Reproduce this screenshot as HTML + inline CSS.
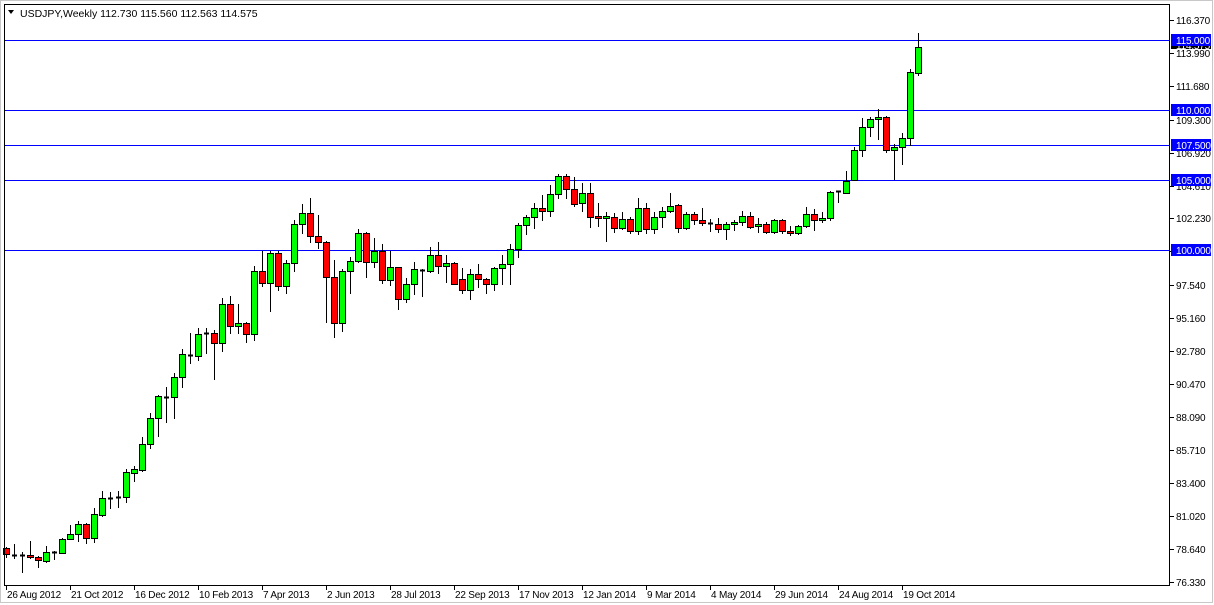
<!DOCTYPE html>
<html><head><meta charset="utf-8"><style>
html,body{margin:0;padding:0;background:#fff;}
svg{display:block;}
text{font-family:"Liberation Sans",sans-serif;font-size:10.5px;}
.ax text{font-size:10px;letter-spacing:-0.2px;}
</style></head><body>
<svg id="s" width="1214" height="605" xmlns="http://www.w3.org/2000/svg">
<rect x="0" y="0" width="1214" height="605" fill="#fff"/>
<rect x="0.5" y="0.5" width="1212" height="602" fill="none" stroke="#c8c8c8"/>
<g id="lines"></g>
<g id="c"></g>
<rect x="4.5" y="4.5" width="1165" height="581" fill="none" stroke="#000"/>
<g id="ax" class="ax"></g>
<path d="M8 10 L14 10 L11 14 Z" fill="#000"/>
<text x="20" y="17" fill="#000">USDJPY,Weekly  112.730 115.560 112.563 114.575</text>
</svg>
<script>
var NS="http://www.w3.org/2000/svg";
function el(p,t,a,txt){var e=document.createElementNS(NS,t);for(var k in a)e.setAttribute(k,a[k]);if(txt!=null)e.textContent=txt;p.appendChild(e);return e;}
var d=[
[548,554,547,557,'r'],[555,555,544,558,'d'],[555,555,552,572,'d'],[555,557,541,558,'r'],[557,560,556,567,'r'],
[552,561,546,562,'g'],[552,552,551,559,'d'],[539,553,538,553,'g'],[534,539,525,539,'g'],[524,534,521,541,'g'],
[524,538,523,543,'r'],[514,538,508,542,'g'],[498,515,491,516,'g'],[498,498,492,508,'d'],[497,497,491,507,'d'],
[472,497,469,502,'g'],[469,473,466,481,'g'],[444,470,437,471,'g'],[418,444,413,448,'g'],[396,418,395,436,'g'],
[397,397,387,422,'d'],[377,397,373,418,'g'],[354,377,349,387,'g'],[355,355,333,363,'d'],[334,356,328,360,'g'],
[333,333,328,353,'d'],[333,343,330,379,'r'],[304,343,298,351,'g'],[304,326,296,333,'r'],[323,326,304,333,'g'],
[323,334,322,342,'r'],[271,334,266,340,'g'],[271,283,251,286,'r'],[253,283,251,311,'g'],[253,286,251,290,'r'],
[263,286,260,293,'g'],[224,263,220,271,'g'],[213,224,204,233,'g'],[213,236,198,242,'r'],[236,242,215,248,'r'],
[242,277,241,322,'r'],[277,323,260,337,'r'],[271,323,269,331,'g'],[261,271,257,293,'g'],[233,261,229,262,'g'],
[233,262,232,277,'r'],[251,262,238,267,'g'],[251,280,244,283,'r'],[267,280,251,285,'g'],[267,299,267,309,'r'],
[284,299,278,302,'g'],[269,284,262,294,'g'],[270,270,269,296,'d'],[255,271,247,272,'g'],[255,266,242,273,'r'],
[263,266,255,282,'g'],[263,284,262,284,'r'],[279,290,268,293,'r'],[274,290,269,299,'g'],[274,279,264,287,'r'],
[279,284,278,293,'r'],[268,284,267,290,'g'],[264,268,255,284,'g'],[249,264,244,284,'g'],[225,249,223,257,'g'],
[217,225,215,234,'g'],[208,217,203,228,'g'],[208,211,195,220,'r'],[194,211,185,216,'g'],[176,194,174,198,'g'],
[176,189,174,198,'r'],[189,204,177,206,'r'],[193,203,183,211,'g'],[193,217,183,227,'r'],[216,218,203,226,'r'],
[216,218,212,241,'g'],[217,228,213,232,'r'],[219,228,212,229,'g'],[219,231,217,233,'r'],[208,231,198,234,'g'],
[208,229,203,233,'r'],[217,229,212,233,'g'],[211,217,207,227,'g'],[206,211,193,212,'g'],[205,228,204,232,'r'],
[214,228,212,229,'g'],[214,220,212,224,'r'],[220,223,208,225,'r'],[223,223,219,231,'d'],[224,229,218,232,'r'],
[224,229,222,239,'g'],[222,224,220,230,'g'],[216,222,211,225,'g'],[216,227,212,228,'r'],[224,226,218,232,'g'],
[224,232,222,233,'r'],[220,232,219,233,'g'],[220,231,219,233,'r'],[231,233,226,235,'r'],[226,233,225,234,'g'],
[214,226,207,227,'g'],[214,220,209,230,'r'],[218,220,212,222,'g'],[192,218,191,220,'g'],[191,191,191,202,'d'],
[181,193,171,193,'g'],[150,180,147,180,'g'],[127,150,118,156,'g'],[119,127,117,136,'g'],[117,119,109,139,'g'],
[117,150,116,152,'r'],[147,150,144,179,'g'],[138,147,133,164,'g'],[72,138,69,145,'g'],[47,73,33,75,'g']
];
var L=document.getElementById('lines');
[40,110,145,180,250].forEach(function(y){el(L,'line',{x1:4,x2:1169,y1:y+.5,y2:y+.5,stroke:'#0000ff','stroke-width':1});});
var C=document.getElementById('c');
d.forEach(function(c,i){
 var x=Math.round(5.7+8*i);
 el(C,'line',{x1:x+.5,x2:x+.5,y1:c[2],y2:c[3]+1,stroke:'#000','stroke-width':1});
 if(c[4]=='d'){el(C,'line',{x1:x-2,x2:x+3,y1:c[0]+.5,y2:c[0]+.5,stroke:'#000','stroke-width':2});}
 else{el(C,'rect',{x:x-2.5,y:c[0]+.5,width:6,height:Math.max(c[1]-c[0],2),fill:c[4]=='g'?'#00ff00':'#ff0000',stroke:'#000','stroke-width':1});}
});
var A=document.getElementById('ax');
var labs=[['116.370',20],['113.990',53],['111.680',86],['109.300',120],['106.920',153],['104.610',186],['102.230',218],['99.850',251],['97.540',285],['95.160',318],['92.780',351],['90.470',384],['88.090',417],['85.710',450],['83.400',483],['81.020',516],['78.640',549],['76.330',582]];
labs.forEach(function(l){el(A,'line',{x1:1170,x2:1174,y1:l[1]+.5,y2:l[1]+.5,stroke:'#000'});el(A,'text',{x:1176,y:l[1]+4,fill:'#000'},l[0]);});
[['110.000',110],['107.500',145],['105.000',180],['100.000',250]].forEach(function(p){
 el(A,'rect',{x:1171,y:p[1]-6,width:40,height:12,fill:'#0000ff'});el(A,'text',{x:1176,y:p[1]+4,fill:'#fff'},p[0]);});
el(A,'rect',{x:1171,y:41,width:40,height:8,fill:'#000'});
el(A,'text',{x:1176,y:49,fill:'#fff'},'114.575');
el(A,'rect',{x:1171,y:34,width:40,height:12,fill:'#0000ff'});el(A,'text',{x:1176,y:44,fill:'#fff'},'115.000');
var dates=['26 Aug 2012','21 Oct 2012','16 Dec 2012','10 Feb 2013','7 Apr 2013','2 Jun 2013','28 Jul 2013','22 Sep 2013','17 Nov 2013','12 Jan 2014','9 Mar 2014','4 May 2014','29 Jun 2014','24 Aug 2014','19 Oct 2014'];
dates.forEach(function(t,k){var x=Math.round(5.7+64*k);el(A,'line',{x1:x+.5,x2:x+.5,y1:585,y2:590,stroke:'#000'});el(A,'text',{x:x+1,y:598,fill:'#000'},t);});
</script>
</body></html>
